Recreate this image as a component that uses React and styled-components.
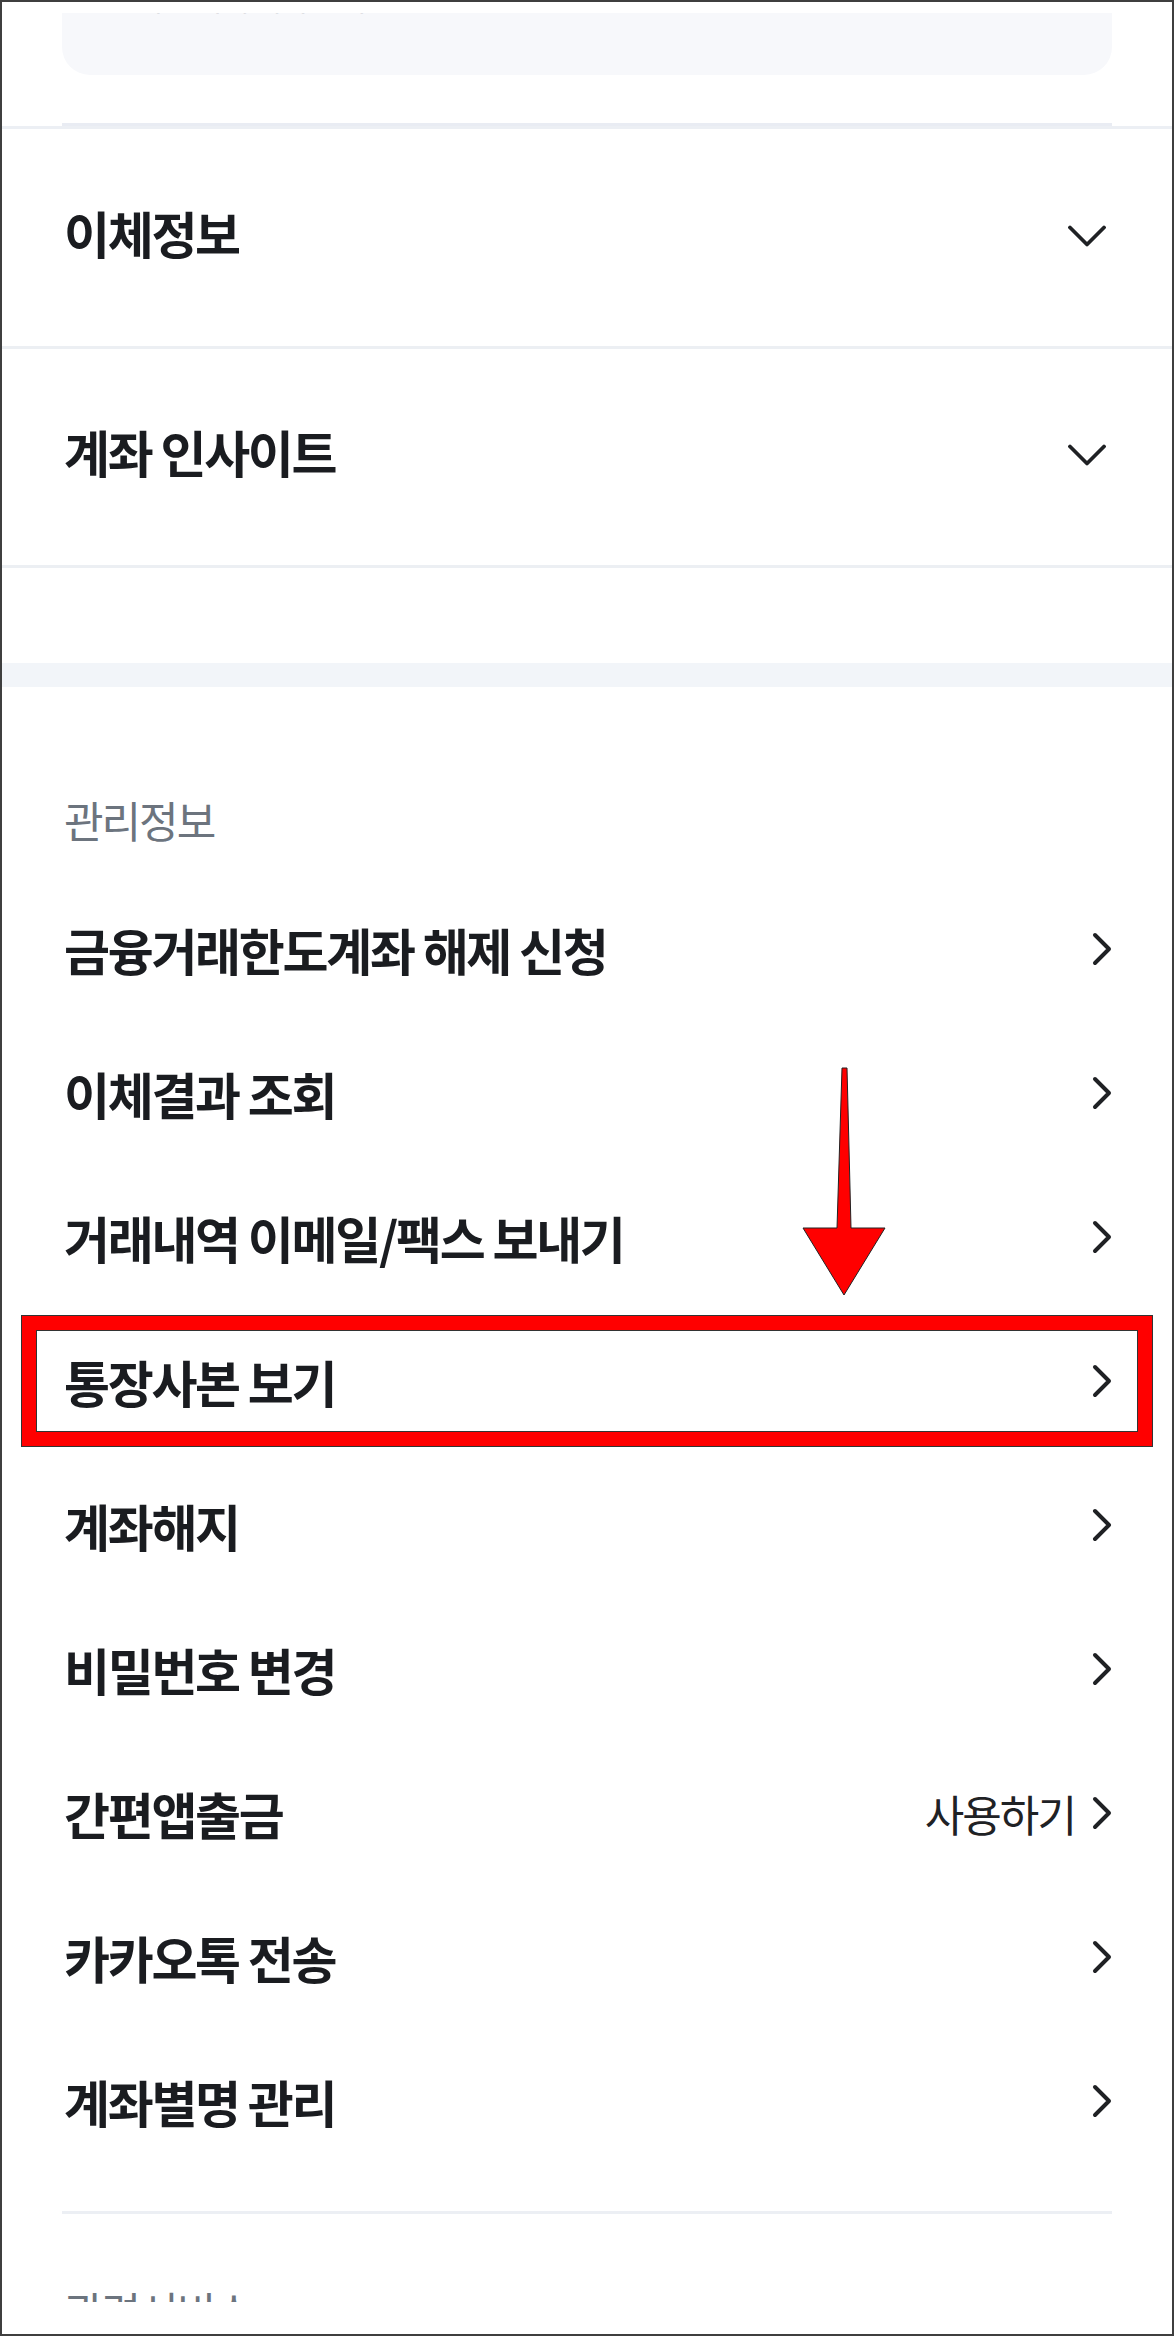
import React from 'react'
import styled, { createGlobalStyle } from 'styled-components';

const GlobalStyle = createGlobalStyle`
  body {
    margin: 0;
    background: #ffffff;
    font-family: "Noto Sans CJK KR", "Noto Sans", sans-serif;
  }
`;

const Frame = styled.div`
  position: relative;
  box-sizing: border-box;
  width: 1174px;
  height: 2336px;
  border: 2px solid #3f3f3f;
  padding-top: 11px;
  background: #ffffff;
`;

const Viewport = styled.div`
  height: 2289px;
  overflow: hidden;
`;

const SummaryCard = styled.div`
  box-sizing: border-box;
  height: 198px;
  margin: -136px 60px 0;
  padding: 100px 40px 58px;
  background: #f7f8fb;
  border-radius: 0 0 28px 28px;
`;

const CardText = styled.div`
  font-size: 30px;
  line-height: 40px;
  color: #9ba1a9;
  letter-spacing: -1px;
  padding-left: 34px;
`;

const Divider = styled.div`
  height: 3px;
  background: ${p => p.$color || '#eceff4'};
  margin: ${p => p.$inset ? '0 60px' : '0'};
  margin-top: ${p => p.$top || 0}px;
`;

const AccordionRow = styled.div`
  display: flex;
  align-items: center;
  justify-content: space-between;
  height: ${p => p.$height}px;
  padding: 0 60px;
  border-bottom: 3px solid #eceff3;
`;

const Title = styled.span`
  font-size: 50px;
  line-height: 60px;
  font-weight: 700;
  letter-spacing: -2.3px;
  color: #1a1c20;
  padding-left: 2px;
  margin-bottom: ${p => p.$lift || 0}px;
`;

const Band = styled.div`
  height: 24px;
  margin-top: 95px;
  background: #f2f5f9;
`;

const Section = styled.section`
  padding: ${p => p.$top}px 60px 0;
`;

const SectionLabel = styled.div`
  font-size: 43px;
  line-height: 60px;
  font-weight: 400;
  letter-spacing: -2px;
  color: #6c747e;
  padding-left: 2px;
`;

const MenuList = styled.div`
  margin-top: 28px;
  display: flex;
  flex-direction: column;
`;

const MenuRow = styled.div`
  display: flex;
  align-items: center;
  justify-content: space-between;
  height: 144px;
`;

const RowRight = styled.div`
  display: flex;
  align-items: center;
  gap: 17px;
`;

const Extra = styled.span`
  font-size: 43px;
  line-height: 60px;
  letter-spacing: -2px;
  color: #1f2225;
`;

const DownIcon = styled.svg`
  display: block;
  margin: 0 6px 4px 0;
`;

const RightIcon = styled.svg`
  display: block;
`;

const Highlight = styled.div`
  position: absolute;
  left: 20px;
  top: 1314px;
  width: 1130px;
  height: 130px;
  box-sizing: border-box;
  border: 14px solid #ff0000;
  box-shadow: 0 0 0 1px #333333, inset 0 0 0 1px #333333;
`;

const Arrow = styled.svg`
  position: absolute;
  left: 798px;
  top: 1062px;
`;

const ChevronDown = () => (
  <DownIcon width="38" height="22" viewBox="0 0 38 22">
    <polyline points="2,2.5 19,19.5 36,2.5" fill="none" stroke="#1f2124" strokeWidth="3.8" strokeLinecap="round" strokeLinejoin="round" />
  </DownIcon>
);

const ChevronRight = () => (
  <RightIcon width="20" height="34" viewBox="0 0 20 34">
    <polyline points="3,3 17,17 3,31" fill="none" stroke="#1f2124" strokeWidth="4" strokeLinecap="round" strokeLinejoin="round" />
  </RightIcon>
);

const menu = [
  { label: '금융거래한도계좌 해제 신청' },
  { label: '이체결과 조회' },
  { label: '거래내역 이메일/팩스 보내기' },
  { label: '통장사본 보기' },
  { label: '계좌해지' },
  { label: '비밀번호 변경' },
  { label: '간편앱출금', extra: '사용하기' },
  { label: '카카오톡 전송' },
  { label: '계좌별명 관리' },
];

const App = () => {
  return (
    <>
      <GlobalStyle />
      <Frame>
        <Viewport>
          <SummaryCard>
            <CardText>최근 거래 내역 보기</CardText>
          </SummaryCard>
          <Divider $inset $top={48} $color="#e9ecf3" />
          <Divider />

          <AccordionRow $height={217}>
            <Title $lift={12}>이체정보</Title>
            <ChevronDown />
          </AccordionRow>
          <AccordionRow $height={216}>
            <Title $lift={12}>계좌 인사이트</Title>
            <ChevronDown />
          </AccordionRow>

          <Band />

          <Section $top={102}>
            <SectionLabel>관리정보</SectionLabel>
            <MenuList>
              {menu.map(item => (
                <MenuRow key={item.label}>
                  <Title>{item.label}</Title>
                  <RowRight>
                    {item.extra && <Extra>{item.extra}</Extra>}
                    <ChevronRight />
                  </RowRight>
                </MenuRow>
              ))}
            </MenuList>
          </Section>

          <Divider $inset $top={38} $color="#eceff4" />

          <Section $top={66}>
            <SectionLabel>관련서비스</SectionLabel>
          </Section>
        </Viewport>

        <Highlight />
        <Arrow width="92" height="240" viewBox="0 0 92 240">
          <polygon points="42,4 47,4 51,164 85,164 44,231 3,164 37,164" fill="#ff0000" stroke="#222222" strokeWidth="1" />
        </Arrow>
      </Frame>
    </>
  )
}

export default App;
